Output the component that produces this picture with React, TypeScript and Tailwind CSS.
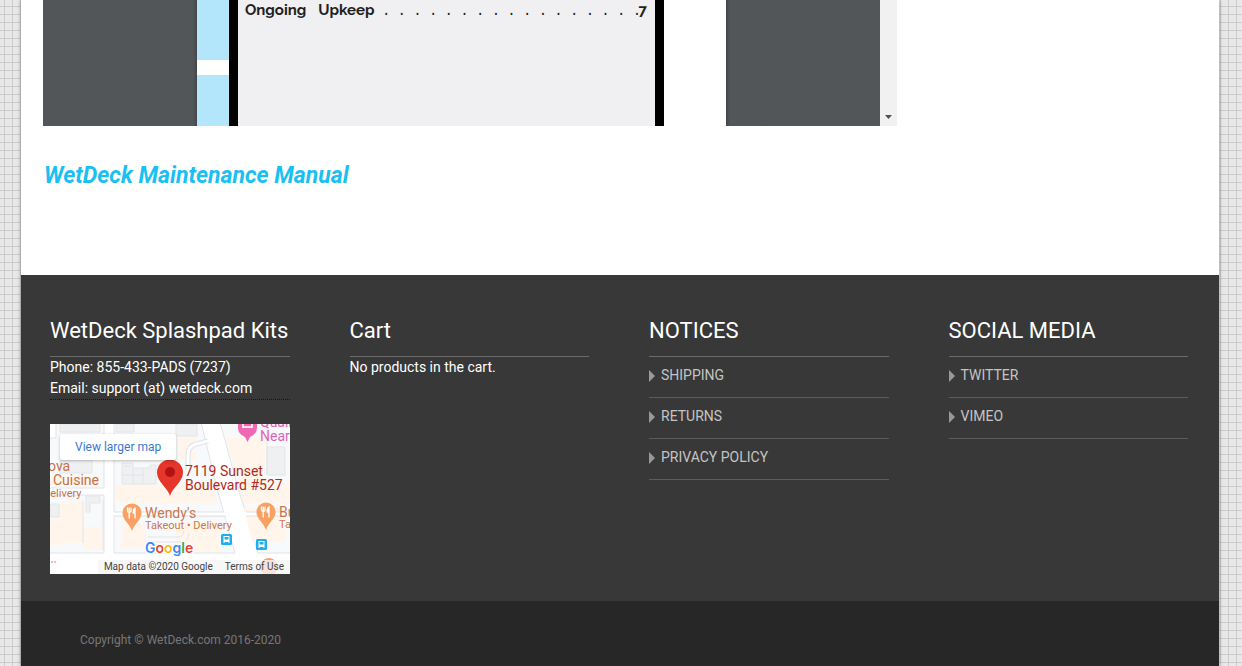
import type { ReactNode } from "react";

const notices = ["SHIPPING", "RETURNS", "PRIVACY POLICY"];
const social = ["TWITTER", "VIMEO"];

function DocumentViewer() {
  return (
    <section
      aria-label="Maintenance manual preview"
      className="flex h-[126px] w-full max-w-[854px] overflow-hidden bg-[#525659]"
    >
      <div className="flex-1 bg-linear-to-l from-[#43474a] to-[#525659] to-[4px]" />
      <div className="flex w-[529px] bg-white">
        <div className="flex w-8 flex-col gap-[15px]">
          <div className="h-[60px] bg-[#b3e5fb]" />
          <div className="flex-1 bg-[#b3e5fb]" />
        </div>
        <div className="w-[435px] border-x-[9px] border-black bg-[#f0eff2] pr-2 pl-[7px]">
          <p className="flex items-center font-['Raleway','Inter',sans-serif] text-[15px] leading-5 font-bold text-[#231f20]">
            <span>Ongoing</span>
            <span className="ml-3">Upkeep</span>
            <span aria-hidden="true" className="ml-[10px] flex flex-1 justify-between">
              {Array.from({ length: 17 }, (_, i) => (
                <span key={i}>.</span>
              ))}
            </span>
            <span>7</span>
          </p>
        </div>
      </div>
      <div className="flex-1 bg-linear-to-r from-[#43474a] to-[#525659] to-[4px]" />
      <div className="flex w-[17px] items-end justify-center bg-[#f1f1f1] pb-[7px]">
        <svg width="7" height="4" viewBox="0 0 7 4" fill="#505050">
          <path d="M0 0h7L3.500 4z" />
        </svg>
      </div>
    </section>
  );
}

function FoodPin({ x, y }: { x: number; y: number }) {
  return (
    <g transform={`translate(${x} ${y})`}>
      <path d="M0 27C-2 20-9.500 16-9.500 9A9.500 9.500 0 0 1 9.500 9C9.500 16 2 20 0 27z" fill="#f9a064" />
      <g stroke="#fff" fill="none" strokeWidth="1.300" strokeLinecap="round">
        <path d="M-4.500 4v3q0 1.500 1.700 1.500T-1 7V4M-2.800 4v10" />
        <path d="M3 14V4q-2 1-1.800 5H3" fill="#fff" />
      </g>
    </g>
  );
}

function BusStop({ x, y }: { x: number; y: number }) {
  return (
    <g transform={`translate(${x} ${y})`}>
      <rect width="11" height="11" rx="1.500" fill="#1faeea" />
      <path d="M2.500 2h6v7h-1V8h-4v1h-1z" fill="#fff" />
      <path d="M3.500 3h4v2.500h-4z" fill="#1faeea" />
    </g>
  );
}

function LocationMap() {
  return (
    <div className="relative h-[150px] w-[240px] overflow-hidden bg-white">
      <svg
        width="240"
        height="150"
        viewBox="0 0 240 150"
        role="img"
        aria-label="Map of 7119 Sunset Boulevard #527"
        className="block font-['Roboto',sans-serif]"
      >
        <rect width="240" height="150" fill="#fff" />
        <g fill="#f8f9fa" stroke="#e1e4e8">
          <path d="M6-2H54V64H-2V14H6zM64-2H151L167 64 185 129H64zM170-2H242V129H208L188 64zM-2 71H54V129H-2z" />
        </g>
        <path
          d="M0 52H50V61H0zM9 77H33V119H9zM0 95H9V121H0zM33 103H53V126H33zM66 61H164L167 79H80L66 77zM127 14H146V36H127zM176 14H215V59H189zM189 60H240V79H193zM71 100H96V124H71zM124 98H170V127H129zM194 84H236V118H202z"
          fill="#fff5ea"
        />
        <g fill="#eff0f2" stroke="#e3e5e8">
          <path d="M10 0H50V8H10zM10 36H42V49H10zM0 80H9V93H0zM36 72H50V79H40V88H36zM72 39H83V44H100V41H106V60H72zM66 0H84V8H66zM126 0H147V12H126zM217 23H235V51H217z" />
        </g>
        <g fill="none" stroke="#e2e5e8">
          <path d="M83 44V60M93 44V60M72 51H93M74 42H80M53 76V126M33 77V119M217 0V51M189 60H217M143 92H176" />
          <path d="M98 113H128Q133 113 134 107M102 118H133Q138 117 139 109" />
        </g>
        <g fill="none">
          <path d="M138 46V31Q138 22 146 20L158 17M64 90H174M196 90H240" stroke="#dfe2e6" strokeWidth="5" />
          <path d="M138 46V31Q138 22 146 20L158 17M62 90H178M194 90H240" stroke="#fff" strokeWidth="3" />
        </g>
        <path d="M1 138h5" stroke="#e17786" strokeDasharray="2 1" />
        <path d="M188 0h19v4q0 6-7 9l-2.500 5-2.500-5q-7-3-7-9z" fill="#ee68b4" />
        <path d="M193 0v4m9-4v4m-9-1h9" stroke="#fff" strokeWidth="1.500" />
        <g fill="#db65b5" fontSize="14">
          <text x="210" y="3">Quality</text>
          <text x="210" y="17">Near</text>
        </g>
        <g fill="#c4704a">
          <text x="-2" y="47" fontSize="14">ova</text>
          <text x="3" y="61" fontSize="14">Cuisine</text>
          <text x="-7" y="73" fontSize="11">Delivery</text>
        </g>
        <FoodPin x={82} y={80} />
        <FoodPin x={216} y={79} />
        <g fill="#c97850">
          <text x="95" y="94" fontSize="14">Wendy's</text>
          <text x="95" y="105" fontSize="11">Takeout • Delivery</text>
          <text x="229" y="93" fontSize="14">Burger</text>
          <text x="229" y="104" fontSize="11">Takeout</text>
        </g>
        <path
          d="M120 72C118 64 107 58 107 48.500A13 13 0 0 1 133 48.500C133 58 122 64 120 72z"
          fill="#e6352b"
        />
        <circle cx="120" cy="48" r="5" fill="#b01313" />
        <g fill="#b12a21" fontSize="14">
          <text x="135" y="52">7119 Sunset</text>
          <text x="135" y="66">Boulevard #527</text>
        </g>
        <BusStop x={171} y={110} />
        <BusStop x={206} y={115} />
        <text
          x="95"
          y="129"
          fontSize="14"
          fontWeight="600"
          stroke="#fff"
          strokeWidth="2"
          paintOrder="stroke"
          className="font-['Inter',sans-serif]"
        >
          <tspan fill="#4285f4">G</tspan>
          <tspan fill="#ea4335">o</tspan>
          <tspan fill="#fbbc05">o</tspan>
          <tspan fill="#4285f4">g</tspan>
          <tspan fill="#34a853">l</tspan>
          <tspan fill="#ea4335">e</tspan>
        </text>
        <circle cx="219" cy="143" r="9" fill="#f9a064" />
      </svg>
      <a
        href="#map"
        className="absolute top-[10px] left-[10px] rounded-xs bg-white px-[15px] text-[12px] leading-[26px] text-[#3b78d0] shadow-[0_1px_3px_rgba(0,0,0,0.25)]"
      >
        View larger map
      </a>
      <div className="absolute right-0 bottom-0 flex gap-3 bg-[#f5f5f5]/80 pr-[6px] pl-[6px] text-[10px] leading-[14px] text-[#444]">
        <span>Map data ©2020 Google</span>
        <a href="#terms">Terms of Use</a>
      </div>
    </div>
  );
}

function Widget({ title, children }: { title: string; children: ReactNode }) {
  return (
    <section className="pr-[31px] pl-[29px]">
      <h2 className="border-b border-[#6b6b6b] pb-[10px] text-[22px] leading-[30px] whitespace-nowrap text-white">
        {title}
      </h2>
      {children}
    </section>
  );
}

function LinkList({ items }: { items: string[] }) {
  return (
    <ul>
      {items.map((item) => (
        <li key={item} className="border-b border-[#5c5c5c] pt-2 pb-3">
          <a href="#" className="flex items-center gap-[6px] text-[14px] leading-5 text-[#c4c4c4]">
            <svg width="6" height="12" viewBox="0 0 6 12" fill="#999" className="mt-[2px]">
              <path d="M0 0 6 6 0 12z" />
            </svg>
            {item}
          </a>
        </li>
      ))}
    </ul>
  );
}

export default function App() {
  return (
    <div className="min-h-screen bg-[#e8e8e8] bg-[linear-gradient(to_right,#cbcbcb_1px,transparent_1px),linear-gradient(to_bottom,#cbcbcb_1px,transparent_1px)] bg-size-[8px_8px] bg-position-[4px_6px] pr-[23px] pl-[21px] font-['Roboto',sans-serif]">
      <div className="flex min-h-screen flex-col bg-white shadow-[0_0_4px_rgba(0,0,0,0.4)]">
        <main className="px-[22px] pb-[83px]">
          <DocumentViewer />
          <h1 className="mt-[33px] pl-px text-[23px] leading-[33px] font-bold text-[#1bc0f2] italic">
            <a href="#manual">WetDeck Maintenance Manual</a>
          </h1>
        </main>
        <footer className="flex flex-1 flex-col bg-[#383838]">
          <div className="grid grid-cols-4 pt-[41px] pb-[27px]">
            <Widget title="WetDeck Splashpad Kits">
              <address className="border-b border-dotted border-[#161616] text-[14px] leading-[21px] text-white not-italic">
                Phone: 855-433-PADS (7237)
                <br />
                Email: support (at) wetdeck.com
              </address>
              <div className="mt-6">
                <LocationMap />
              </div>
            </Widget>
            <Widget title="Cart">
              <p className="text-[14px] leading-[21px] text-white">No products in the cart.</p>
            </Widget>
            <Widget title="NOTICES">
              <LinkList items={notices} />
            </Widget>
            <Widget title="SOCIAL MEDIA">
              <LinkList items={social} />
            </Widget>
          </div>
          <div className="flex-1 bg-[#272727] px-[59px] pt-[29px] pb-4">
            <p className="text-[12px] leading-5 text-[#777]">Copyright © WetDeck.com 2016-2020</p>
          </div>
        </footer>
      </div>
    </div>
  );
}
